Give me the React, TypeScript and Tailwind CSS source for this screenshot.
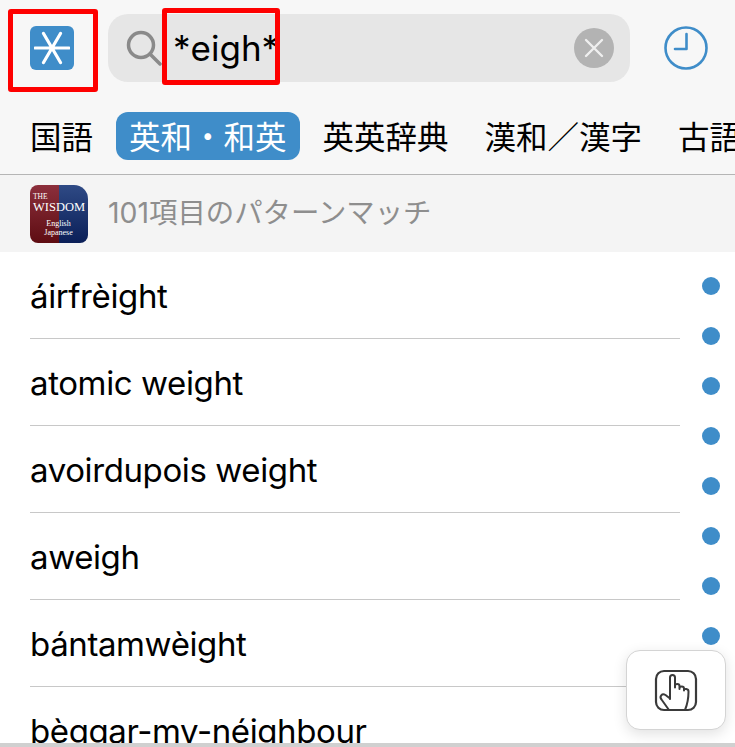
const WORDS = ["áirfrèight", "atomic weight", "avoirdupois weight", "aweigh", "bántamwèight", "bèggar-my-néighbour"]
const TABS = ["国語", "英和・和英", "英英辞典", "漢和／漢字", "古語"]
const DOTS = [0, 1, 2, 3, 4, 5, 6, 7]

const sans = "font-['Inter','Noto_Sans_CJK_JP',sans-serif]"

const App = () => {
  return (
    <div className={`relative h-[747px] w-[735px] overflow-hidden bg-white text-black ${sans}`}>
      {/* top bar */}
      <div className="flex h-[100px] items-start bg-[#f7f7f7] pt-[14px]">
        <div className="flex h-[68px] w-[108px] shrink-0 items-center pl-[30px]">
          <div className="flex h-[44px] w-[44px] items-center justify-center rounded-[6px] bg-[#3f8dc9]">
            <svg width="36" height="36" viewBox="0 0 36 36" fill="none" stroke="#fff" strokeWidth="3.2" strokeLinecap="round">
              <path d="M1 18H35M9.5 3.500L26.500 32.500M26.500 3.500L9.500 32.500" />
            </svg>
          </div>
        </div>
        <div className="flex h-[68px] w-[522px] shrink-0 items-center rounded-[20px] bg-[#e6e6e6] pl-[18px] pr-[16px]">
          <svg width="36" height="36" viewBox="0 0 36 36" fill="none" stroke="#8a8a8a" strokeWidth="3.5" strokeLinecap="round" className="shrink-0">
            <circle cx="15" cy="15" r="12.500" />
            <path d="M24.500 24.500L34 34" />
          </svg>
          <span className="ml-[11px] flex-1 text-[35px] leading-none">*eigh*</span>
          <div className="flex h-[40px] w-[40px] items-center justify-center rounded-full bg-[#b3b3b3]">
            <svg width="20" height="20" viewBox="0 0 20 20" fill="none" stroke="#efefef" strokeWidth="2.4" strokeLinecap="round">
              <path d="M2 2L18 18M18 2L2 18" />
            </svg>
          </div>
        </div>
        <div className="flex h-[68px] flex-1 items-center justify-center pl-[6px]">
          <svg width="44" height="44" viewBox="0 0 44 44" fill="none" stroke="#3f8dc9" strokeWidth="2.6" strokeLinecap="round" strokeLinejoin="round">
            <circle cx="22" cy="22" r="20.500" />
            <path d="M22.500 8V23H11" />
          </svg>
        </div>
      </div>

      {/* dictionary tabs */}
      <div className="flex h-[75px] items-start gap-[36px] overflow-hidden whitespace-nowrap border-b border-[#b5b5b5] bg-[#f7f7f7] pl-[30px] pt-[12px]">
        {TABS.map(tab => tab === "英和・和英" ? (
          <div key={tab} className="-mx-[13px] flex h-[48px] items-center rounded-[12px] bg-[#3f8dc9] px-[13px] pt-[3px] text-[31.5px] leading-none text-white">{tab}</div>
        ) : (
          <div key={tab} className="flex h-[48px] items-center pt-[3px] text-[31.5px] leading-none">{tab}</div>
        ))}
      </div>

      {/* result header */}
      <div className="flex h-[77px] items-center bg-[#f4f4f4] pl-[30px]">
        <div className="relative flex h-[58px] w-[58px] overflow-hidden rounded-[8px] rounded-tr-[14px] font-['Liberation_Serif',serif] text-white">
          <div className="h-full w-[29px] bg-gradient-to-b from-[#8c2f3c] to-[#5e0c12]" />
          <div className="h-full w-[29px] bg-gradient-to-b from-[#2f4a85] to-[#0b1f58]" />
          <div className="absolute inset-0 pl-[3px] pt-[8px]">
            <div className="text-[7.5px] leading-[8px]">THE</div>
            <div className="text-[12.5px] leading-[12px]">WISDOM</div>
            <div className="mt-[6px] pr-[4px] text-center text-[8px] leading-[9px]">English</div>
            <div className="pr-[4px] text-center text-[8px] leading-[9px]">Japanese</div>
          </div>
        </div>
        <span className="ml-[20px] text-[28.4px] leading-none text-[#8e8e8e]">101項目のパターンマッチ</span>
      </div>

      {/* list */}
      <div className="pl-[30px] pr-[55px]">
        {WORDS.map(word => (
          <div key={word} className="flex h-[87px] items-center border-b border-[#c8c8c8] pt-[2px] text-[33px] leading-none tracking-[-0.39px]">
            {word}
          </div>
        ))}
      </div>

      {/* index dots */}
      <div className="absolute left-[702px] top-[277px] flex flex-col gap-[32px]">
        {DOTS.map(dot => (
          <div key={dot} className="h-[18px] w-[18px] rounded-full bg-[#3f8dc9]" />
        ))}
      </div>

      {/* floating gesture button */}
      <div className="absolute left-[626px] top-[650px] flex h-[80px] w-[100px] items-center justify-center rounded-[14px] border border-[#d4d4d4] bg-white shadow-[0_4px_14px_rgba(0,0,0,0.12)]">
        <svg width="44" height="44" viewBox="0 0 44 44" fill="none" stroke="#3a3a3a" strokeWidth="2" strokeLinecap="round" strokeLinejoin="round">
          <rect x="2" y="3" width="40" height="39" rx="8" strokeWidth="2.200" />
          <path d="M16 31V9.500C16 6 21 6 21 9.500V19.500M21 19V17.500C21 15.500 25.500 15.500 25.500 18V21M25.500 20C25.500 18 30 18 30 20.500V22.500M30 22C30 20.500 34.500 20.500 34.500 23.500C34.500 30 33.500 36 31 42" />
          <path d="M16 30.500L11.500 27C8 25 5 28.500 7.500 31.500L15 42" />
        </svg>
      </div>

      {/* bottom strip */}
      <div className="absolute bottom-0 left-0 h-[4px] w-full bg-[#d0d0d0]" />

      {/* red annotation boxes */}
      <div className="absolute left-[8px] top-[9px] h-[83px] w-[90px] rounded-[3px] border-[5px] border-[#fe0000]" />
      <div className="absolute left-[162px] top-[8px] h-[77px] w-[118px] rounded-[3px] border-[5px] border-[#fe0000]" />
    </div>
  )
}

export default App
